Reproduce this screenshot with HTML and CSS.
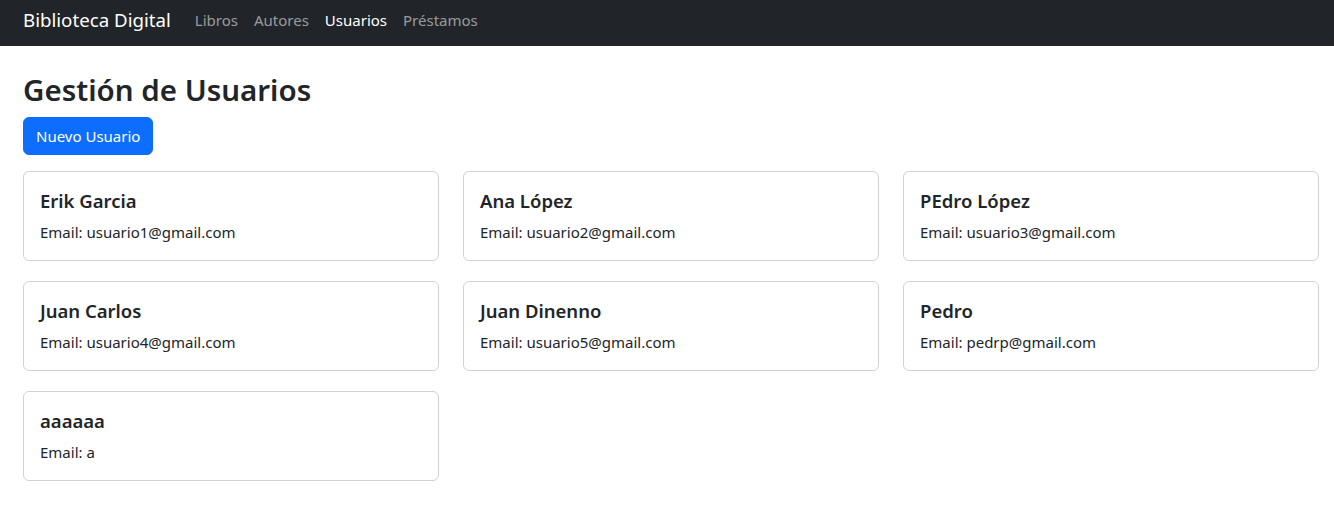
FILE: index.html
```html
<!DOCTYPE html>
<html lang="es">
<head>
<meta charset="utf-8">
<title>Biblioteca Digital</title>
<link rel="stylesheet" href="styles.css">
</head>
<body>
<nav class="navbar">
  <div class="nav-inner">
    <span class="brand">Biblioteca Digital</span>
    <ul class="nav-links">
      <li class="nav-link">Libros</li>
      <li class="nav-link">Autores</li>
      <li class="nav-link active">Usuarios</li>
      <li class="nav-link">Préstamos</li>
    </ul>
  </div>
</nav>
<main class="container">
  <h2 class="title">Gestión de Usuarios</h2>
  <button class="btn-primary">Nuevo Usuario</button>
  <div class="grid">
    <div class="card"><h5 class="card-title">Erik Garcia</h5><p class="card-text">Email: usuario1@gmail.com</p></div>
    <div class="card"><h5 class="card-title">Ana López</h5><p class="card-text">Email: usuario2@gmail.com</p></div>
    <div class="card"><h5 class="card-title">PEdro López</h5><p class="card-text">Email: usuario3@gmail.com</p></div>
    <div class="card"><h5 class="card-title">Juan Carlos</h5><p class="card-text">Email: usuario4@gmail.com</p></div>
    <div class="card"><h5 class="card-title">Juan Dinenno</h5><p class="card-text">Email: usuario5@gmail.com</p></div>
    <div class="card"><h5 class="card-title">Pedro</h5><p class="card-text">Email: pedrp@gmail.com</p></div>
    <div class="card"><h5 class="card-title">aaaaaa</h5><p class="card-text">Email: a</p></div>
  </div>
</main>
</body>
</html>
```
FILE: styles.css
```css
* { box-sizing: border-box; }
body {
  margin: 0;
  font-family: "Noto Sans", "Open Sans", sans-serif;
  font-size: 15px;
  line-height: 24px;
  color: #212529;
  background: #fff;
}
.navbar {
  background: #212529;
  height: 46px;
  display: flex;
  align-items: center;
  padding-bottom: 6px;
}
.nav-inner {
  display: flex;
  align-items: center;
  padding: 0 23px;
}
.brand {
  color: #fff;
  font-size: 18.7px;
  line-height: 30px;
  margin-right: 16px;
}
.nav-links {
  display: flex;
  list-style: none;
  margin: 0;
  padding: 0;
}
.nav-link {
  color: rgba(255,255,255,.55);
  padding: 0 8px;
}
.nav-link.active { color: #fff; }
.container {
  padding: 24px 15px 0 23px;
}
.title {
  font-size: 29.5px;
  font-weight: 600;
  line-height: 38px;
  margin: 1px 0 8px;
}
.btn-primary {
  font-family: inherit;
  font-size: 15px;
  line-height: 24px;
  color: #fff;
  background: #0d6efd;
  border: 1px solid #0d6efd;
  border-radius: 6px;
  padding: 6px 12px;
}
.grid {
  margin-top: 16px;
  display: grid;
  grid-template-columns: repeat(3, 1fr);
  column-gap: 24px;
  row-gap: 20px;
}
.card {
  border: 1px solid rgba(0,0,0,.175);
  border-radius: 6px;
  padding: 16px;
}
.card-title {
  font-size: 18.5px;
  font-weight: 600;
  line-height: 24px;
  margin: 1px 0 7px;
}
.card-text { margin: 0; }
```
